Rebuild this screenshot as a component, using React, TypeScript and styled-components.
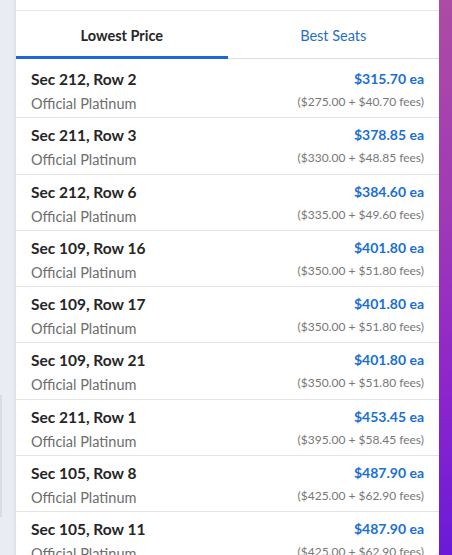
import React from "react";
import styled, { createGlobalStyle } from "styled-components";

const Global = createGlobalStyle`
  html, body { margin: 0; padding: 0; }
  body { font-family: Lato, "Open Sans", sans-serif; background: #e9ecf3; overflow: hidden; }
`;

const Page = styled.div`
  display: flex;
  width: 452px;
  height: 555px;
  overflow: hidden;
`;

const Gutter = styled.div`
  width: 16px;
  flex-shrink: 0;
  background: #e9ecf3;
  border-right: 2px solid #dfe3eb;
  display: flex;
  flex-direction: column;
  padding-top: 395px;
  box-sizing: border-box;
`;

const SideEdge = styled.div`
  height: 122px;
  width: 2px;
  background: #d9dce3;
`;

const Card = styled.div`
  flex: 1;
  background: #fff;
  display: flex;
  flex-direction: column;
  border-bottom-right-radius: 6px;
`;

const Header = styled.div`
  height: 10px;
  flex-shrink: 0;
  border-bottom: 1px solid #e6e6e6;
`;

const Tabs = styled.div`
  display: flex;
  flex-shrink: 0;
  height: 48px;
  border-bottom: 1px solid #dedede;
  box-sizing: border-box;
`;

const Tab = styled.div<{ $active?: boolean }>`
  flex: 1;
  display: flex;
  align-items: center;
  justify-content: center;
  font-size: 14.5px;
  font-weight: ${(p) => (p.$active ? 700 : 400)};
  color: ${(p) => (p.$active ? "#262626" : "#1f6fc6")};
  border-bottom: 3px solid ${(p) => (p.$active ? "#1a68d6" : "transparent")};
  margin-bottom: -1px;
  padding-top: 3px;
`;

const List = styled.div`
  display: flex;
  flex-direction: column;
  padding-top: 3px;
`;

const Row = styled.div`
  display: flex;
  justify-content: space-between;
  height: 56.3px;
  box-sizing: border-box;
  padding: 7px 15px 0 15px;
  border-bottom: 1px solid #e4e4e4;
  flex-shrink: 0;
`;

const Col = styled.div<{ $right?: boolean }>`
  display: flex;
  flex-direction: column;
  align-items: ${(p) => (p.$right ? "flex-end" : "flex-start")};
`;

const Title = styled.div`
  font-size: 15.5px;
  font-weight: 700;
  color: #262626;
  line-height: 20px;
`;

const Sub = styled.div`
  font-size: 14.5px;
  color: #6e6e6e;
  line-height: 20px;
  margin-top: 5px;
`;

const Price = styled.div`
  font-size: 14px;
  font-weight: 700;
  color: #1a6fd4;
  line-height: 18px;
  margin-top: 1px;
`;

const Fees = styled.div`
  font-size: 12px;
  color: #777;
  line-height: 18px;
  margin-top: 5px;
`;

const Strip = styled.div`
  width: 13px;
  flex-shrink: 0;
  background: linear-gradient(180deg, #ac4ca3 0%, #a03cb4 35%, #8c26cc 70%, #6a1ad8 100%);
`;

const rows = [
  ["Sec 212, Row 2", "$315.70 ea", "($275.00 + $40.70 fees)"],
  ["Sec 211, Row 3", "$378.85 ea", "($330.00 + $48.85 fees)"],
  ["Sec 212, Row 6", "$384.60 ea", "($335.00 + $49.60 fees)"],
  ["Sec 109, Row 16", "$401.80 ea", "($350.00 + $51.80 fees)"],
  ["Sec 109, Row 17", "$401.80 ea", "($350.00 + $51.80 fees)"],
  ["Sec 109, Row 21", "$401.80 ea", "($350.00 + $51.80 fees)"],
  ["Sec 211, Row 1", "$453.45 ea", "($395.00 + $58.45 fees)"],
  ["Sec 105, Row 8", "$487.90 ea", "($425.00 + $62.90 fees)"],
  ["Sec 105, Row 11", "$487.90 ea", "($425.00 + $62.90 fees)"],
];

export default function App() {
  return (
    <>
      <Global />
      <Page>
        <Gutter>
          <SideEdge />
        </Gutter>
        <Card>
          <Header />
          <Tabs>
            <Tab $active>Lowest Price</Tab>
            <Tab>Best Seats</Tab>
          </Tabs>
          <List>
            {rows.map(([t, p, f], i) => (
              <Row key={i}>
                <Col>
                  <Title>{t}</Title>
                  <Sub>Official Platinum</Sub>
                </Col>
                <Col $right>
                  <Price>{p}</Price>
                  <Fees>{f}</Fees>
                </Col>
              </Row>
            ))}
          </List>
        </Card>
        <Strip />
      </Page>
    </>
  );
}
